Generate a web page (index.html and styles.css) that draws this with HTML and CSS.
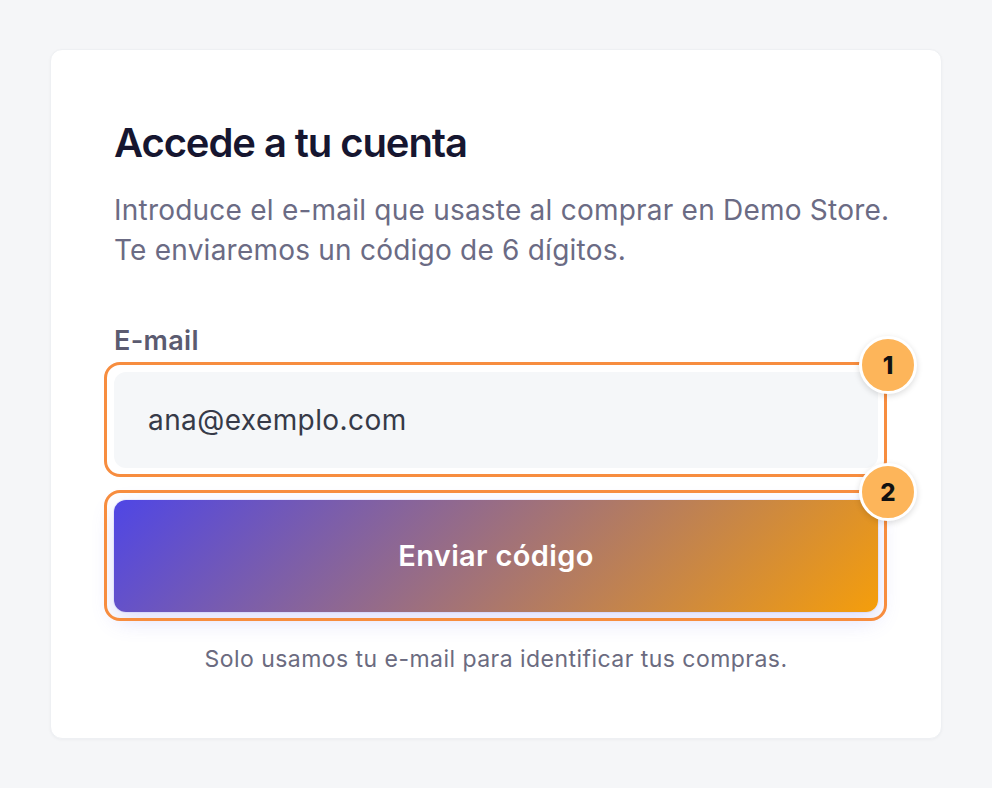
FILE: index.html
```html
<!DOCTYPE html>
<html lang="es">
<head>
<meta charset="utf-8">
<title>Accede a tu cuenta</title>
<link rel="stylesheet" href="styles.css">
</head>
<body>
<main class="card">
  <h1 class="title">Accede a tu cuenta</h1>
  <p class="desc">Introduce el e-mail que usaste al comprar en Demo Store.<br>Te enviaremos un código de 6 dígitos.</p>
  <label class="label" for="email">E-mail</label>
  <div class="anno-wrap">
    <input class="input" id="email" type="email" value="ana@exemplo.com">
    <span class="anno"><span class="badge">1</span></span>
  </div>
  <div class="anno-wrap btn-wrap">
    <button class="btn" type="button">Enviar código</button>
    <span class="anno"><span class="badge badge-2">2</span></span>
  </div>
  <p class="note">Solo usamos tu e-mail para identificar tus compras.</p>
</main>
</body>
</html>
```
FILE: styles.css
```css
* { box-sizing: border-box; }
html, body { margin: 0; padding: 0; }
body {
  background: #f5f6f8;
  font-family: Inter, "Noto Sans", sans-serif;
  padding: 49px 50px;
}
.card {
  width: 892px;
  height: 690px;
  background: #fff;
  border: 1px solid #eef0f3;
  border-radius: 12px;
  box-shadow: 0 1px 3px rgba(15, 23, 42, 0.04);
  padding: 69px 63px 0;
  display: flex;
  flex-direction: column;
}
.title {
  margin: 0;
  font-size: 40px;
  line-height: 48px;
  font-weight: 600;
  letter-spacing: -0.027em;
  color: #161630;
}
.desc {
  margin: 23px 0 0;
  font-size: 28px;
  line-height: 40px;
  letter-spacing: 0.008em;
  white-space: nowrap;
  color: #6b6b84;
}
.label {
  margin-top: 55px;
  font-size: 27px;
  line-height: 32px;
  font-weight: 600;
  letter-spacing: 0.012em;
  color: #5b5b70;
}
.anno-wrap {
  position: relative;
  margin-top: 15px;
}
.btn-wrap { margin-top: 32px; }
.input {
  display: block;
  width: 100%;
  height: 96px;
  border: none;
  border-radius: 12px;
  background: #f5f7f9;
  padding: 0 34px;
  font-family: inherit;
  font-size: 28px;
  letter-spacing: 0.015em;
  color: #363a48;
  outline: none;
}
.btn {
  display: block;
  width: 100%;
  height: 112px;
  border: none;
  border-radius: 12px;
  background: linear-gradient(135deg, #4f46e5 0%, #f59e0b 100%);
  box-shadow: 0 8px 22px rgba(99, 102, 241, 0.22), 0 0 0 1px rgba(129, 140, 248, 0.12);
  color: #fff;
  font-family: inherit;
  font-size: 29px;
  font-weight: 600;
  letter-spacing: 0.012em;
  padding: 0 0 2px;
  cursor: pointer;
}
.anno {
  position: absolute;
  top: -10px;
  left: -10px;
  right: -9px;
  bottom: -9px;
  border: 3px solid #f78d3f;
  border-radius: 16px;
  pointer-events: none;
}
.badge {
  position: absolute;
  top: -29px;
  right: -33px;
  width: 58px;
  height: 58px;
  border-radius: 50%;
  background: #fdb55a;
  border: 3px solid #fff;
  box-shadow: 0 2px 6px rgba(0, 0, 0, 0.14);
  display: flex;
  align-items: center;
  justify-content: center;
  font-size: 24px;
  font-weight: 800;
  color: #111;
}
.badge-2 { top: -30px; }
.note {
  margin: 33px 0 0;
  text-align: center;
  font-size: 23px;
  line-height: 28px;
  letter-spacing: 0.02em;
  color: #6b6b80;
}
```
